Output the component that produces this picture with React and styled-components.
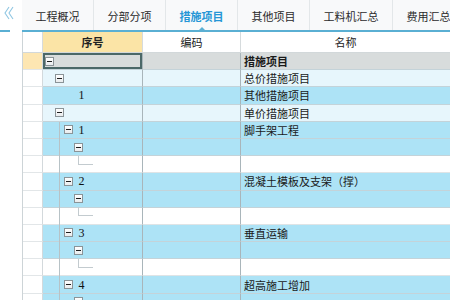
import React from 'react';
import styled, { createGlobalStyle, css } from 'styled-components';

const GlobalStyle = createGlobalStyle`
  html, body {
    margin: 0;
    padding: 0;
    background: #ffffff;
    overflow: hidden;
  }
  body {
    font-family: "Noto Sans CJK SC", "Noto Sans", sans-serif;
    font-size: 11px;
    color: #1c1c1c;
  }
`;

const tabs = ['工程概况', '分部分项', '措施项目', '其他项目', '工料机汇总', '费用汇总'];
const ACTIVE_TAB = 2;

// 表格数据
const rows = [
  { level: 0, box: true, name: '措施项目', tone: 'selected', bold: true },
  { level: 1, box: true, name: '总价措施项目', tone: 'light' },
  { level: 2, box: false, code: '1', name: '其他措施项目', tone: 'sky' },
  { level: 1, box: true, name: '单价措施项目', tone: 'light' },
  { level: 2, box: true, code: '1', name: '脚手架工程', tone: 'sky', guide: true },
  { level: 3, box: true, tone: 'sky', guide: true },
  { level: 4, elbow: true, tone: 'white', guide: true },
  { level: 2, box: true, code: '2', name: '混凝土模板及支架（撑）', tone: 'sky', guide: true },
  { level: 3, box: true, tone: 'sky', guide: true },
  { level: 4, elbow: true, tone: 'white', guide: true },
  { level: 2, box: true, code: '3', name: '垂直运输', tone: 'sky', guide: true },
  { level: 3, box: true, tone: 'sky', guide: true },
  { level: 4, elbow: true, tone: 'white', guide: true },
  { level: 2, box: true, code: '4', name: '超高施工增加', tone: 'sky', guide: true },
  { level: 3, box: true, tone: 'sky', guide: true },
];

const toneColors = {
  selected: '#d8dcdc',
  light: '#e7f6fc',
  sky: '#ade3f6',
  white: '#ffffff',
};

const App = () => {
  return (
    <>
      <GlobalStyle />
      <Page>
        <Sidebar>
          <CollapseButton>
            <svg width="10" height="14" viewBox="0 0 10 14">
              <polyline points="5,1 1,7 5,13" fill="none" stroke="#8fc6e2" strokeWidth="1.1" />
              <polyline points="9,1 5,7 9,13" fill="none" stroke="#8fc6e2" strokeWidth="1.1" />
            </svg>
          </CollapseButton>
          <SideLine />
        </Sidebar>
        <Main>
          <TabBar>
            {tabs.map((t, i) => (
              <Tab key={t} active={i === ACTIVE_TAB}>
                {t}
                {i === ACTIVE_TAB && <Notch />}
              </Tab>
            ))}
          </TabBar>
          <Grid>
            <HeadCell />
            <HeadCell yellow bold>序号</HeadCell>
            <HeadCell>编码</HeadCell>
            <HeadCell last>名称</HeadCell>
            {rows.map((r, i) => (
              <React.Fragment key={i}>
                <IndicatorCell selected={r.tone === 'selected'} />
                <TreeCell tone={r.tone} focused={r.tone === 'selected'} guide={r.guide}>
                  <Indent level={r.level} />
                  {r.box && <ToggleBox />}
                  {!r.box && !r.elbow && <BoxSpacer />}
                  {r.elbow && <Elbow />}
                  {r.code && <Code>{r.code}</Code>}
                </TreeCell>
                <Cell tone={r.tone} />
                <NameCell tone={r.tone} bold={r.bold}>{r.name}</NameCell>
              </React.Fragment>
            ))}
          </Grid>
        </Main>
      </Page>
    </>
  );
};

export default App;

// 样式

const Page = styled.div`
  display: flex;
  width: 450px;
  height: 300px;
  overflow: hidden;
`;

const Sidebar = styled.div`
  width: 22px;
  flex-shrink: 0;
  display: flex;
  flex-direction: column;
  background: #ffffff;
`;

const CollapseButton = styled.div`
  height: 30px;
  flex-shrink: 0;
  display: flex;
  align-items: flex-start;
  justify-content: center;
  padding-top: 6px;
  box-sizing: border-box;
  padding-right: 4px;
`;

const SideLine = styled.div`
  width: 10px;
  height: 2px;
  flex-shrink: 0;
  background: #5aafd3;
`;

const Main = styled.div`
  flex: 1;
  display: flex;
  flex-direction: column;
  min-width: 0;
`;

const TabBar = styled.div`
  height: 30px;
  flex-shrink: 0;
  display: flex;
  align-items: stretch;
  background: #f8f9fa;
  border-bottom: 2px solid #5aafd3;
  position: relative;
`;

const Tab = styled.div`
  position: relative;
  display: flex;
  align-items: center;
  justify-content: center;
  padding: 1px 13.5px 0;
  flex-shrink: 0;
  font-size: 11px;
  white-space: nowrap;
  border-right: 1px solid #e3e7e9;
  color: ${p => (p.active ? '#2596d6' : '#2a2a2a')};
  font-weight: ${p => (p.active ? 700 : 400)};
`;

const Notch = styled.span`
  position: absolute;
  left: 50%;
  bottom: -1px;
  transform: translateX(-50%);
  width: 0;
  height: 0;
  border-left: 4px solid transparent;
  border-right: 4px solid transparent;
  border-bottom: 4px solid #5aafd3;
`;

const Grid = styled.div`
  flex-shrink: 0;
  display: grid;
  grid-template-columns: 20px 100px 98px 1fr;
  grid-template-rows: 21px;
  grid-auto-rows: 17.2px;
  border-left: 1px solid #cdd4d7;
`;

const lineColor = '#c4d3d9';

const HeadCell = styled.div`
  display: flex;
  align-items: center;
  justify-content: center;
  font-size: 11px;
  background: ${p => (p.yellow ? '#fbe4a6' : '#ffffff')};
  font-weight: ${p => (p.bold ? 700 : 400)};
  border-bottom: 1px solid #d2d8da;
  border-right: ${p => (p.last ? 'none' : '1px solid #d6dbdd')};
  color: #222;
`;

const IndicatorCell = styled.div`
  background: ${p => (p.selected ? '#fde6b2' : '#ffffff')};
  border-bottom: 1px solid #e2e6e8;
  border-right: 1px solid #d3d9dc;
`;

const baseCell = css`
  display: flex;
  align-items: center;
  box-sizing: border-box;
  background: ${p => toneColors[p.tone]};
  border-bottom: 1px solid ${p => (p.tone === 'white' ? '#dfe4e6' : lineColor)};
  min-width: 0;
`;

const TreeCell = styled.div`
  ${baseCell};
  position: relative;
  padding-left: 2px;
  border-right: 1px solid #a9b5ba;
  ${p => p.focused && css`
    box-shadow: inset 0 0 0 2px #4b6868;
  `}
  ${p => p.guide && css`
    &::before {
      content: '';
      position: absolute;
      left: 16px;
      top: 0;
      bottom: -1px;
      border-left: 1px solid #b7c2c6;
    }
  `}
`;

const Cell = styled.div`
  ${baseCell};
  border-right: 1px solid #a9b5ba;
`;

const NameCell = styled.div`
  ${baseCell};
  padding-left: 3px;
  font-size: 11px;
  white-space: nowrap;
  font-weight: ${p => (p.bold ? 700 : 400)};
  color: #1a1a1a;
`;

const Indent = styled.span`
  display: inline-block;
  flex-shrink: 0;
  width: ${p => p.level * 9.7}px;
`;

const ToggleBox = styled.span`
  position: relative;
  display: inline-block;
  flex-shrink: 0;
  width: 9px;
  height: 9px;
  box-sizing: border-box;
  border: 1px solid #8b9498;
  background: linear-gradient(#ffffff, #e9ecee);

  &::after {
    content: '';
    position: absolute;
    left: 1px;
    right: 1px;
    top: 3px;
    height: 1px;
    background: #1e1e1e;
  }
`;

const BoxSpacer = styled.span`
  display: inline-block;
  width: 9px;
  flex-shrink: 0;
`;

const Elbow = styled.span`
  display: inline-block;
  flex-shrink: 0;
  width: 14px;
  height: 8px;
  margin-left: -6px;
  margin-top: -8px;
  border-left: 1px solid #c3cbcf;
  border-bottom: 1px solid #c3cbcf;
`;

const Code = styled.span`
  margin-left: 5px;
  font-family: "Liberation Serif", "DejaVu Serif", serif;
  font-size: 12px;
  color: #111;
  line-height: 1;
`;
